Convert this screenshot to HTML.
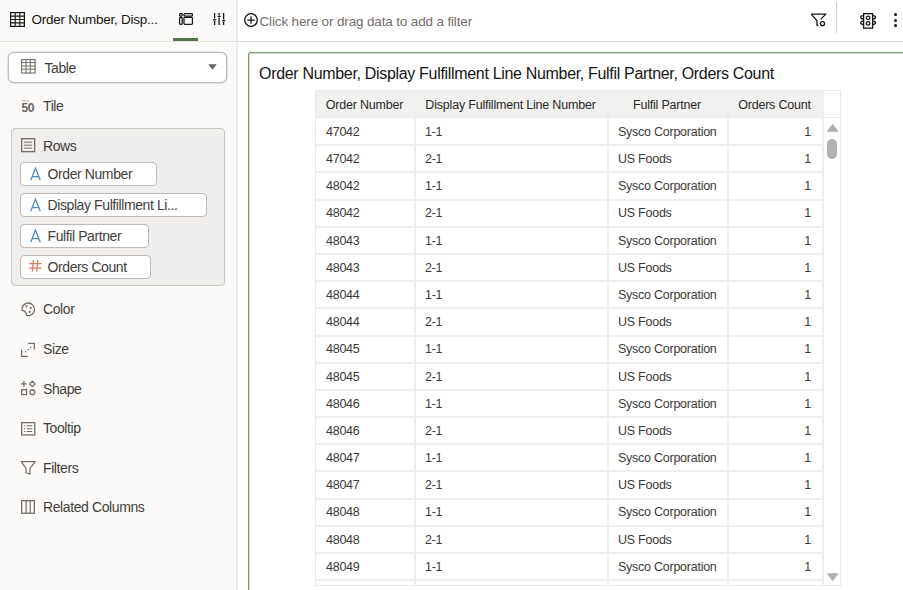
<!DOCTYPE html>
<html><head><meta charset="utf-8"><style>
*{margin:0;padding:0;box-sizing:border-box}
html,body{width:903px;height:590px;overflow:hidden;background:#fff;font-family:"Liberation Sans",sans-serif;color:#161513}
.abs{position:absolute}
svg{position:absolute;overflow:visible}
.t{position:absolute;white-space:nowrap;line-height:1}
.item{position:absolute;left:43px;font-size:14px;letter-spacing:-0.4px;color:#423e3a;white-space:nowrap;line-height:1}
.cell{position:absolute;font-size:12.5px;letter-spacing:-0.25px;color:#3c3936;white-space:nowrap;line-height:1}
.hcell{position:absolute;font-size:12.5px;letter-spacing:-0.2px;color:#2c2926;white-space:nowrap;line-height:1;text-align:center}
</style></head><body>
<div class="abs" style="left:0;top:0;width:238px;height:590px;background:#fbfaf8;border-right:2px solid #ecebea"></div>
<div class="abs" style="left:0;top:41px;width:903px;height:1px;background:#e4e1dd"></div>
<svg style="left:10px;top:12px" width="15" height="15" viewBox="0 0 15 15"><rect x="0.6" y="0.6" width="13.8" height="13.8" fill="none" stroke="#161513" stroke-width="1.2"/><path d="M0 4.1H15M0 7.5H15M0 10.9H15M5.2 0V15M9.8 0V15" stroke="#161513" stroke-width="1.1"/></svg>
<div class="t" style="left:31.5px;top:12.6px;font-size:13.5px;letter-spacing:-0.25px;color:#161513">Order Number, Disp...</div>
<svg style="left:178.5px;top:13px" width="14" height="12" viewBox="0 0 14 12"><g fill="none" stroke="#161513" stroke-width="1.25"><rect x="0.6" y="0.6" width="2.6" height="2.4" rx="0.8"/><rect x="0.6" y="4.4" width="2.6" height="7" rx="0.8"/><rect x="5" y="0.6" width="8.4" height="2.4" rx="0.8"/><rect x="5" y="4.4" width="8.4" height="7" rx="0.8"/></g></svg>
<svg style="left:212.5px;top:13px" width="13" height="12" viewBox="0 0 13 12"><g stroke="#161513" stroke-width="1.3"><path d="M1.6 0V5.6M1.6 8V12M6.1 0V2.2M6.1 4.6V12M10.6 0V6.4M10.6 8.8V12"/><path d="M0 6.8H3.2M4.5 3.4H7.7M9 7.6H12.2"/></g></svg>
<div class="abs" style="left:173px;top:38px;width:25px;height:3px;background:#4f7a47"></div>
<div class="abs" style="left:8px;top:51.5px;width:218.5px;height:31.3px;background:#fff;border:1px solid #c0bcb8;box-shadow:0 0 0 0.6px rgba(192,188,184,0.6);border-radius:6px"></div>
<svg style="left:21px;top:59px" width="15" height="15" viewBox="0 0 15 15"><rect x="0.6" y="0.6" width="13.4" height="13.4" fill="none" stroke="#736e68" stroke-width="1.1"/><path d="M0 3.6H15M0 7H15M0 10.2H15M5 0V15M9.3 0V15" stroke="#736e68" stroke-width="1"/></svg>
<div class="item" style="left:44.5px;top:61.4px">Table</div>
<svg style="left:207.5px;top:64px" width="9" height="6" viewBox="0 0 9 6"><path d="M0.3 0.3H8.7L4.5 5.8Z" fill="#6a6560"/></svg>
<svg style="left:21px;top:99px" width="15" height="14" viewBox="0 0 15 14"><path d="M1.2 1.9H7.4" stroke="#9c9792" stroke-width="1.3" stroke-dasharray="1.4 1"/><text x="0.6" y="12.6" font-family="Liberation Sans" font-size="12" font-weight="bold" fill="#6a655f" letter-spacing="-0.4">50</text></svg>
<div class="item" style="top:99.4px">Tile</div>
<div class="abs" style="left:11px;top:128px;width:213.5px;height:158px;background:#efeeec;border:1px solid #c9c5c1;border-radius:4px"></div>
<svg style="left:21px;top:138px" width="14" height="14" viewBox="0 0 14 14"><rect x="0.65" y="0.65" width="13" height="13" fill="none" stroke="#736e68" stroke-width="1.3"/><path d="M3 4.2H11M3 7.2H11M3 10.2H11" stroke="#736e68" stroke-width="1"/></svg>
<div class="item" style="top:138.5px">Rows</div>
<div class="abs" style="left:20px;top:162px;width:137px;height:24.30000000000001px;background:#fff;border:1px solid #bfbab5;border-radius:4px"></div>
<svg style="left:30px;top:168px" width="11" height="13" viewBox="0 0 11 13"><path d="M0.7 12.3L5.5 0.3L10.3 12.3M2.4 8.6H8.6" fill="none" stroke="#4f88c6" stroke-width="1.25"/></svg>
<div class="item" style="left:47.5px;top:166.7px">Order Number</div>
<div class="abs" style="left:20px;top:192.5px;width:186.5px;height:24.5px;background:#fff;border:1px solid #bfbab5;border-radius:4px"></div>
<svg style="left:30px;top:198.5px" width="11" height="13" viewBox="0 0 11 13"><path d="M0.7 12.3L5.5 0.3L10.3 12.3M2.4 8.6H8.6" fill="none" stroke="#4f88c6" stroke-width="1.25"/></svg>
<div class="item" style="left:47.5px;top:198.1px">Display Fulfillment Li...</div>
<div class="abs" style="left:20px;top:223.5px;width:128.5px;height:24.5px;background:#fff;border:1px solid #bfbab5;border-radius:4px"></div>
<svg style="left:30px;top:229.5px" width="11" height="13" viewBox="0 0 11 13"><path d="M0.7 12.3L5.5 0.3L10.3 12.3M2.4 8.6H8.6" fill="none" stroke="#4f88c6" stroke-width="1.25"/></svg>
<div class="item" style="left:47.5px;top:229.1px">Fulfil Partner</div>
<div class="abs" style="left:20px;top:254.5px;width:130.5px;height:24.30000000000001px;background:#fff;border:1px solid #bfbab5;border-radius:4px"></div>
<svg style="left:29px;top:260.0px" width="13" height="13" viewBox="0 0 13 13"><path d="M4.5 0L3.3 11.6M9 0L7.8 11.6M0 3.7H12.5M0 8.2H12.5" fill="none" stroke="#e07862" stroke-width="1.3"/></svg>
<div class="item" style="left:47.5px;top:260.1px">Orders Count</div>
<svg style="left:21px;top:302px" width="15" height="15" viewBox="0 0 15 15"><g fill="none" stroke="#736e68" stroke-width="1.3"><path d="M1 8.3A6.3 6.3 0 1 1 5.6 13.4C5.6 11 4.8 8.8 1 8.3Z"/></g><g fill="#736e68"><circle cx="5.5" cy="4.3" r="1.1"/><circle cx="9.7" cy="5.9" r="1.1"/><circle cx="8.7" cy="9.9" r="1.1"/></g></svg>
<div class="item" style="top:302.3px">Color</div>
<svg style="left:21px;top:341.5px" width="15" height="15" viewBox="0 0 15 15"><path d="M7.2 1.4H13.3V7.5M0.6 7.8V14.3H6.8" fill="none" stroke="#736e68" stroke-width="1.3"/><g fill="#736e68"><circle cx="4.7" cy="9.8" r="0.75"/><circle cx="7.3" cy="7.5" r="0.75"/><circle cx="9.6" cy="5.2" r="0.75"/></g></svg>
<div class="item" style="top:342.2px">Size</div>
<svg style="left:21px;top:381px" width="15" height="15" viewBox="0 0 15 15"><g fill="none" stroke="#736e68" stroke-width="1.3"><path d="M2.9 0V5.8M0 2.9H5.8"/><path d="M11.4 0.2L14.1 2.9L11.4 5.6L8.7 2.9Z"/><rect x="0.65" y="8.65" width="4.9" height="4.9"/><circle cx="11.4" cy="11.2" r="2.45"/></g></svg>
<div class="item" style="top:381.9px">Shape</div>
<svg style="left:21px;top:421.5px" width="15" height="15" viewBox="0 0 15 15"><rect x="0.65" y="0.65" width="13.1" height="12.3" fill="none" stroke="#736e68" stroke-width="1.3"/><path d="M2.9 3.8H4.3M2.9 6.7H4.3M2.9 9.5H4.3M5.6 3.8H11.3M5.6 6.7H11.3M5.6 9.5H11.3" stroke="#736e68" stroke-width="1.1"/></svg>
<div class="item" style="top:420.6px">Tooltip</div>
<svg style="left:21px;top:460.5px" width="15" height="15" viewBox="0 0 15 15"><path d="M0.3 0.7H14.3L8.9 7.3V13.2L5.1 11.8V7.3Z" fill="none" stroke="#736e68" stroke-width="1.2" stroke-linejoin="round"/></svg>
<div class="item" style="top:460.6px">Filters</div>
<svg style="left:21px;top:500px" width="15" height="15" viewBox="0 0 15 15"><rect x="0.65" y="0.65" width="12.7" height="12.6" fill="none" stroke="#736e68" stroke-width="1.3"/><path d="M5.1 0V14M9.2 0V14" stroke="#736e68" stroke-width="1.2"/></svg>
<div class="item" style="top:499.9px">Related Columns</div>
<svg style="left:244px;top:13px" width="14" height="14" viewBox="0 0 14 14"><circle cx="7" cy="7" r="6.3" fill="none" stroke="#161513" stroke-width="1.3"/><path d="M7 3.3V10.7M3.3 7H10.7" stroke="#161513" stroke-width="1.25"/></svg>
<div class="t" style="left:259.5px;top:14.7px;font-size:13.5px;letter-spacing:-0.15px;color:#736e69">Click here or drag data to add a filter</div>
<svg style="left:811px;top:13px" width="16" height="15" viewBox="0 0 16 15"><path d="M0.3 1.1H14.9L9.6 6.4M0.3 1.1L6 7.6V12.3L7.3 12.5" fill="none" stroke="#161513" stroke-width="1.3" stroke-linejoin="round"/><circle cx="11.5" cy="10.7" r="2" fill="none" stroke="#161513" stroke-width="1.3"/></svg>
<div class="abs" style="left:836px;top:2px;width:1px;height:31px;background:#cfcbc6"></div>
<svg style="left:860px;top:13px" width="16" height="16" viewBox="0 0 16 16"><g fill="none" stroke="#161513" stroke-width="1.3"><rect x="3.6" y="0.65" width="9" height="14.5"/><circle cx="8.1" cy="4.9" r="1.75"/><circle cx="8.1" cy="10.4" r="1.75"/><path d="M3.6 2.6Q0.7 2.6 0.7 4.3Q0.7 6 3.6 6M3.6 8.1Q0.7 8.1 0.7 9.8Q0.7 11.5 3.6 11.5M12.6 2.6Q15.5 2.6 15.5 4.3Q15.5 6 12.6 6M12.6 8.1Q15.5 8.1 15.5 9.8Q15.5 11.5 12.6 11.5"/></g></svg>
<div class="abs" style="left:894px;top:12.7px;width:3.1px;height:3.1px;border-radius:50%;background:#161513"></div>
<div class="abs" style="left:894px;top:18.6px;width:3.1px;height:3.1px;border-radius:50%;background:#161513"></div>
<div class="abs" style="left:894px;top:24.2px;width:3.1px;height:3.1px;border-radius:50%;background:#161513"></div>
<div class="abs" style="left:248px;top:52px;width:700px;height:600px;border:1px solid #7a9a71;box-shadow:inset 0 0 0 1px rgba(122,154,113,0.35);border-radius:2px"></div>
<div class="t" style="left:259px;top:65.5px;font-size:16px;letter-spacing:-0.32px;color:#161513">Order Number, Display Fulfillment Line Number, Fulfil Partner, Orders Count</div>
<div class="abs" style="left:315px;top:90px;width:526px;height:495.5px;border:1px solid #ebeae8;overflow:hidden;background:#fff">
<div class="abs" style="left:0;top:0;width:506px;height:27px;background:#f1f1f0"></div>
<div class="abs" style="left:0;top:26px;width:524px;height:1px;background:#eaeae9"></div>
<div class="abs" style="left:98px;top:0;width:2px;height:500px;background:#efefee"></div>
<div class="abs" style="left:291px;top:0;width:2px;height:500px;background:#efefee"></div>
<div class="abs" style="left:411px;top:0;width:2px;height:500px;background:#efefee"></div>
<div class="abs" style="left:506px;top:0;width:2px;height:500px;background:#efefee"></div>
<div class="abs" style="left:0;top:53.19px;width:506px;height:2px;background:#efefee"></div>
<div class="abs" style="left:0;top:80.38px;width:506px;height:2px;background:#efefee"></div>
<div class="abs" style="left:0;top:107.57px;width:506px;height:2px;background:#efefee"></div>
<div class="abs" style="left:0;top:134.76px;width:506px;height:2px;background:#efefee"></div>
<div class="abs" style="left:0;top:161.95px;width:506px;height:2px;background:#efefee"></div>
<div class="abs" style="left:0;top:189.14px;width:506px;height:2px;background:#efefee"></div>
<div class="abs" style="left:0;top:216.33px;width:506px;height:2px;background:#efefee"></div>
<div class="abs" style="left:0;top:243.52px;width:506px;height:2px;background:#efefee"></div>
<div class="abs" style="left:0;top:270.71px;width:506px;height:2px;background:#efefee"></div>
<div class="abs" style="left:0;top:297.90px;width:506px;height:2px;background:#efefee"></div>
<div class="abs" style="left:0;top:325.09px;width:506px;height:2px;background:#efefee"></div>
<div class="abs" style="left:0;top:352.28px;width:506px;height:2px;background:#efefee"></div>
<div class="abs" style="left:0;top:379.47px;width:506px;height:2px;background:#efefee"></div>
<div class="abs" style="left:0;top:406.66px;width:506px;height:2px;background:#efefee"></div>
<div class="abs" style="left:0;top:433.85px;width:506px;height:2px;background:#efefee"></div>
<div class="abs" style="left:0;top:461.04px;width:506px;height:2px;background:#efefee"></div>
<div class="abs" style="left:0;top:488.23px;width:506px;height:2px;background:#efefee"></div>
<div class="abs" style="left:0;top:515.42px;width:506px;height:2px;background:#efefee"></div>
<div class="hcell" style="left:-1px;width:99px;top:8px">Order Number</div>
<div class="hcell" style="left:98px;width:193px;top:8px">Display Fulfillment Line Number</div>
<div class="hcell" style="left:291px;width:120px;top:8px">Fulfil Partner</div>
<div class="hcell" style="left:411px;width:95px;top:8px">Orders Count</div>
<div class="cell" style="left:10px;top:34.80px">47042</div>
<div class="cell" style="left:109px;top:34.80px">1-1</div>
<div class="cell" style="left:302px;top:34.80px">Sysco Corporation</div>
<div class="cell" style="left:411px;width:84px;text-align:right;top:34.80px">1</div>
<div class="cell" style="left:10px;top:61.99px">47042</div>
<div class="cell" style="left:109px;top:61.99px">2-1</div>
<div class="cell" style="left:302px;top:61.99px">US Foods</div>
<div class="cell" style="left:411px;width:84px;text-align:right;top:61.99px">1</div>
<div class="cell" style="left:10px;top:89.18px">48042</div>
<div class="cell" style="left:109px;top:89.18px">1-1</div>
<div class="cell" style="left:302px;top:89.18px">Sysco Corporation</div>
<div class="cell" style="left:411px;width:84px;text-align:right;top:89.18px">1</div>
<div class="cell" style="left:10px;top:116.37px">48042</div>
<div class="cell" style="left:109px;top:116.37px">2-1</div>
<div class="cell" style="left:302px;top:116.37px">US Foods</div>
<div class="cell" style="left:411px;width:84px;text-align:right;top:116.37px">1</div>
<div class="cell" style="left:10px;top:143.56px">48043</div>
<div class="cell" style="left:109px;top:143.56px">1-1</div>
<div class="cell" style="left:302px;top:143.56px">Sysco Corporation</div>
<div class="cell" style="left:411px;width:84px;text-align:right;top:143.56px">1</div>
<div class="cell" style="left:10px;top:170.75px">48043</div>
<div class="cell" style="left:109px;top:170.75px">2-1</div>
<div class="cell" style="left:302px;top:170.75px">US Foods</div>
<div class="cell" style="left:411px;width:84px;text-align:right;top:170.75px">1</div>
<div class="cell" style="left:10px;top:197.94px">48044</div>
<div class="cell" style="left:109px;top:197.94px">1-1</div>
<div class="cell" style="left:302px;top:197.94px">Sysco Corporation</div>
<div class="cell" style="left:411px;width:84px;text-align:right;top:197.94px">1</div>
<div class="cell" style="left:10px;top:225.13px">48044</div>
<div class="cell" style="left:109px;top:225.13px">2-1</div>
<div class="cell" style="left:302px;top:225.13px">US Foods</div>
<div class="cell" style="left:411px;width:84px;text-align:right;top:225.13px">1</div>
<div class="cell" style="left:10px;top:252.32px">48045</div>
<div class="cell" style="left:109px;top:252.32px">1-1</div>
<div class="cell" style="left:302px;top:252.32px">Sysco Corporation</div>
<div class="cell" style="left:411px;width:84px;text-align:right;top:252.32px">1</div>
<div class="cell" style="left:10px;top:279.51px">48045</div>
<div class="cell" style="left:109px;top:279.51px">2-1</div>
<div class="cell" style="left:302px;top:279.51px">US Foods</div>
<div class="cell" style="left:411px;width:84px;text-align:right;top:279.51px">1</div>
<div class="cell" style="left:10px;top:306.70px">48046</div>
<div class="cell" style="left:109px;top:306.70px">1-1</div>
<div class="cell" style="left:302px;top:306.70px">Sysco Corporation</div>
<div class="cell" style="left:411px;width:84px;text-align:right;top:306.70px">1</div>
<div class="cell" style="left:10px;top:333.89px">48046</div>
<div class="cell" style="left:109px;top:333.89px">2-1</div>
<div class="cell" style="left:302px;top:333.89px">US Foods</div>
<div class="cell" style="left:411px;width:84px;text-align:right;top:333.89px">1</div>
<div class="cell" style="left:10px;top:361.08px">48047</div>
<div class="cell" style="left:109px;top:361.08px">1-1</div>
<div class="cell" style="left:302px;top:361.08px">Sysco Corporation</div>
<div class="cell" style="left:411px;width:84px;text-align:right;top:361.08px">1</div>
<div class="cell" style="left:10px;top:388.27px">48047</div>
<div class="cell" style="left:109px;top:388.27px">2-1</div>
<div class="cell" style="left:302px;top:388.27px">US Foods</div>
<div class="cell" style="left:411px;width:84px;text-align:right;top:388.27px">1</div>
<div class="cell" style="left:10px;top:415.46px">48048</div>
<div class="cell" style="left:109px;top:415.46px">1-1</div>
<div class="cell" style="left:302px;top:415.46px">Sysco Corporation</div>
<div class="cell" style="left:411px;width:84px;text-align:right;top:415.46px">1</div>
<div class="cell" style="left:10px;top:442.65px">48048</div>
<div class="cell" style="left:109px;top:442.65px">2-1</div>
<div class="cell" style="left:302px;top:442.65px">US Foods</div>
<div class="cell" style="left:411px;width:84px;text-align:right;top:442.65px">1</div>
<div class="cell" style="left:10px;top:469.84px">48049</div>
<div class="cell" style="left:109px;top:469.84px">1-1</div>
<div class="cell" style="left:302px;top:469.84px">Sysco Corporation</div>
<div class="cell" style="left:411px;width:84px;text-align:right;top:469.84px">1</div>
<div class="cell" style="left:10px;top:497.03px">48049</div>
<div class="cell" style="left:109px;top:497.03px">2-1</div>
<div class="cell" style="left:302px;top:497.03px">US Foods</div>
<div class="cell" style="left:411px;width:84px;text-align:right;top:497.03px">1</div>
</div>
<svg style="left:826.5px;top:123.5px" width="12" height="8" viewBox="0 0 12 8"><path d="M5.7 0.8L10.6 7.2H0.8Z" fill="#b3aea9" stroke="#b3aea9" stroke-width="1.2" stroke-linejoin="round"/></svg>
<div class="abs" style="left:827px;top:139px;width:10px;height:19.5px;border-radius:5px;background:#b6b1ac"></div>
<svg style="left:826.5px;top:573px" width="12" height="8" viewBox="0 0 12 8"><path d="M5.7 7.2L10.6 0.8H0.8Z" fill="#b3aea9" stroke="#b3aea9" stroke-width="1.2" stroke-linejoin="round"/></svg>
</body></html>
